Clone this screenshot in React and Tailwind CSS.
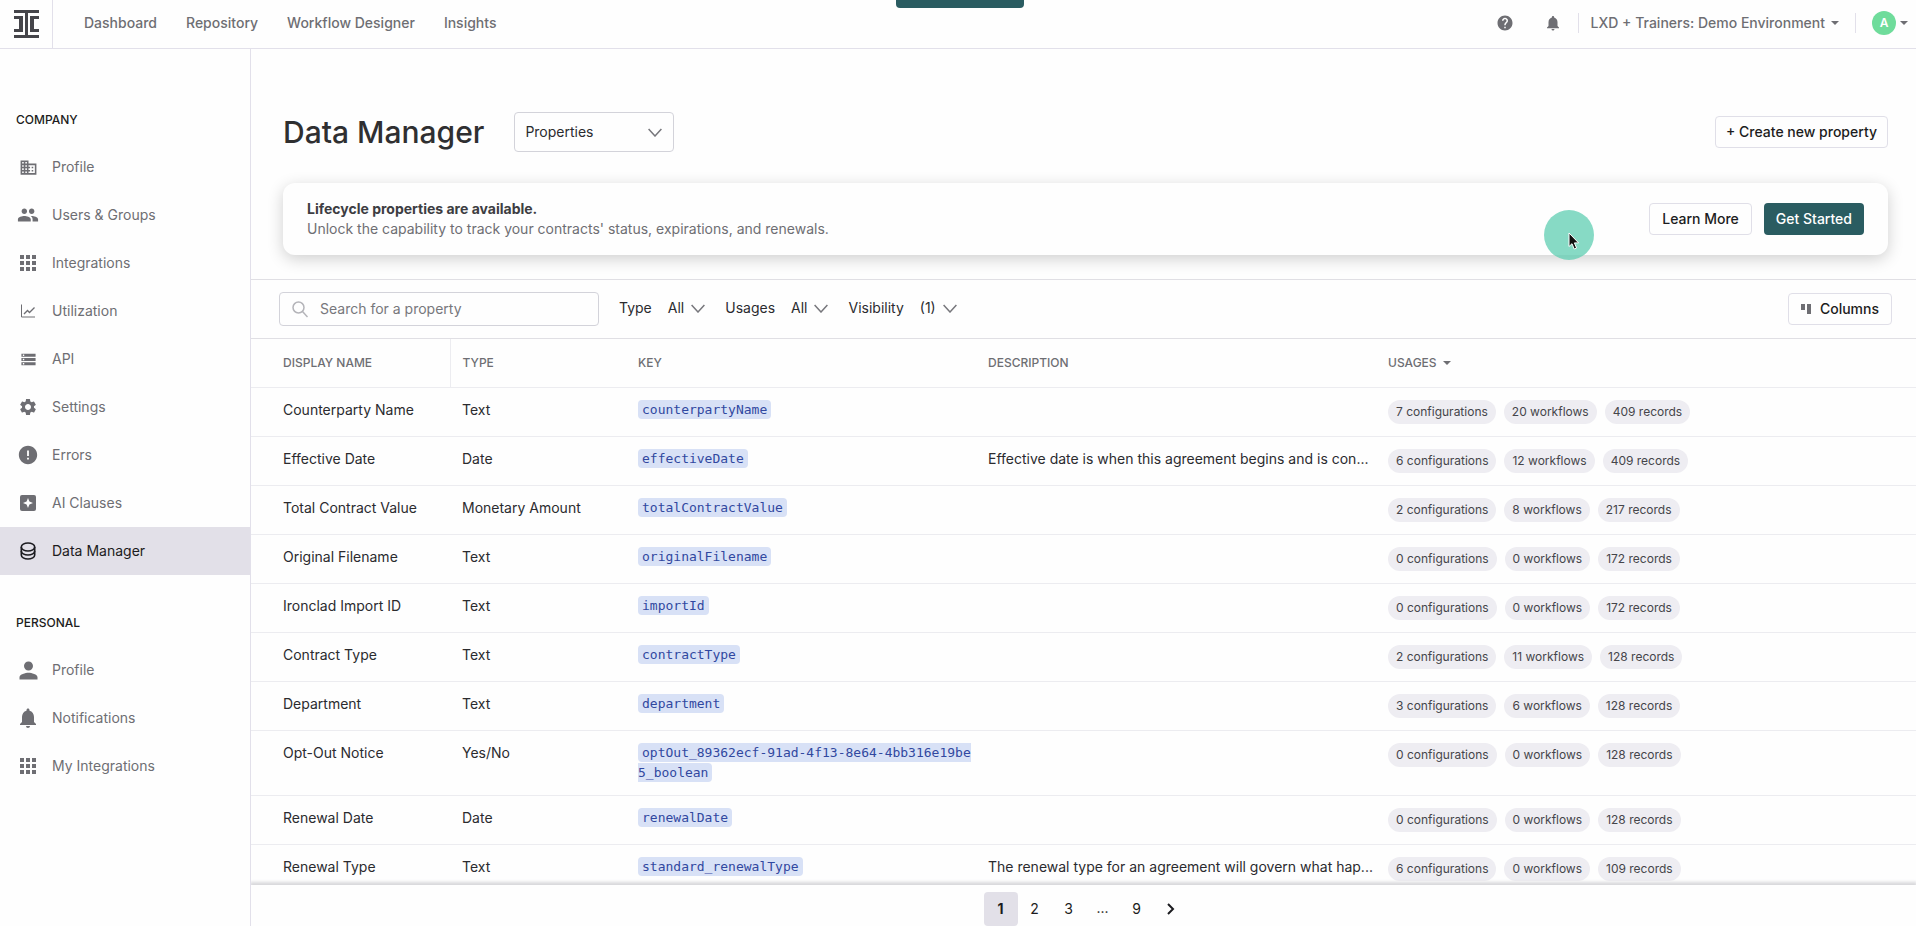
import React from 'react';
import {
  MdApps,
  MdBusiness,
  MdError,
  MdHelp,
  MdNotifications,
  MdPeople,
  MdPerson,
  MdSettings,
  MdStorage,
} from 'react-icons/md';

const topLinks = ['Dashboard', 'Repository', 'Workflow Designer', 'Insights'];

const companyLinks = [
  { label: 'Profile', icon: <MdBusiness size={19} /> },
  { label: 'Users & Groups', icon: <MdPeople size={22} /> },
  { label: 'Integrations', icon: <MdApps size={24} /> },
  { label: 'Utilization', icon: <ChartIcon /> },
  { label: 'API', icon: <MdStorage size={17} /> },
  { label: 'Settings', icon: <MdSettings size={20} /> },
  { label: 'Errors', icon: <MdError size={22} /> },
  { label: 'AI Clauses', icon: <SparkleIcon /> },
  { label: 'Data Manager', icon: <DatabaseIcon />, active: true },
];

const personalLinks = [
  { label: 'Profile', icon: <MdPerson size={27} /> },
  { label: 'Notifications', icon: <MdNotifications size={24} /> },
  { label: 'My Integrations', icon: <MdApps size={24} /> },
];

const rows = [
  { name: 'Counterparty Name', type: 'Text', id: 'counterpartyName', description: '', usages: [7, 20, 409] },
  { name: 'Effective Date', type: 'Date', id: 'effectiveDate', description: 'Effective date is when this agreement begins and is con...', usages: [6, 12, 409] },
  { name: 'Total Contract Value', type: 'Monetary Amount', id: 'totalContractValue', description: '', usages: [2, 8, 217] },
  { name: 'Original Filename', type: 'Text', id: 'originalFilename', description: '', usages: [0, 0, 172] },
  { name: 'Ironclad Import ID', type: 'Text', id: 'importId', description: '', usages: [0, 0, 172] },
  { name: 'Contract Type', type: 'Text', id: 'contractType', description: '', usages: [2, 11, 128] },
  { name: 'Department', type: 'Text', id: 'department', description: '', usages: [3, 6, 128] },
  { name: 'Opt-Out Notice', type: 'Yes/No', id: 'optOut_89362ecf-91ad-4f13-8e64-4bb316e19be5_boolean', description: '', usages: [0, 0, 128] },
  { name: 'Renewal Date', type: 'Date', id: 'renewalDate', description: '', usages: [0, 0, 128] },
  { name: 'Renewal Type', type: 'Text', id: 'standard_renewalType', description: 'The renewal type for an agreement will govern what hap...', usages: [6, 0, 109] },
];

function Logo() {
  return (
    <svg width="26" height="28" viewBox="0 0 26 28" fill="#45454a" aria-hidden="true">
      <path d="M0 0h25v3H0zM0 25h25v3H0zM11 3h3v22h-3z" />
      <path d="M0 6h9v16H0v-3h5V9H0zM25 6h-9v16h9v-3h-5V9h5z" />
    </svg>
  );
}

function ChartIcon() {
  return (
    <svg width="14" height="14" viewBox="0 0 14 14" fill="none" stroke="currentColor" aria-hidden="true">
      <path d="M.5 .5v12.5h13.500" />
      <path d="M3 10l3.500-3.500 2 2L13.500 3.500" strokeWidth="1.300" />
    </svg>
  );
}

function SparkleIcon() {
  return (
    <svg width="16" height="16" viewBox="0 0 16 16" aria-hidden="true">
      <rect width="16" height="16" rx="2" fill="currentColor" />
      <path d="M8 3l1.400 3.600L13 8 9.400 9.400 8 13 6.600 9.400 3 8l3.600-1.400z" fill="#fff" />
    </svg>
  );
}

function DatabaseIcon() {
  return (
    <svg width="16" height="18" viewBox="0 0 16 18" fill="none" stroke="currentColor" strokeWidth="1.600" aria-hidden="true">
      <ellipse cx="8" cy="5" rx="6.700" ry="4" />
      <path d="M1.300 5v8c0 2.200 3 4 6.700 4s6.700-1.800 6.700-4V5" />
      <path d="M1.300 9c0 2.200 3 4 6.700 4s6.700-1.800 6.700-4" />
    </svg>
  );
}

function Chevron({ className = '' }) {
  return (
    <svg width="14" height="9" viewBox="0 0 14 9" fill="none" stroke="#77777c" strokeWidth="1.500" className={className} aria-hidden="true">
      <path d="M.6 1L7 8l6.400-7" />
    </svg>
  );
}

function Caret() {
  return (
    <svg width="8" height="4" viewBox="0 0 8 4" fill="currentColor" aria-hidden="true">
      <path d="M0 0h8L4 4z" />
    </svg>
  );
}

function SideSection({ title, links }) {
  return (
    <section className="pt-10">
      <h2 className="mb-[15px] px-4 text-xs leading-4 font-medium text-[#1c1c20]">{title}</h2>
      <ul>
        {links.map((link) => (
          <li key={link.label}>
            <a
              href="#"
              className={`flex h-12 items-center gap-3 px-4 text-sm ${
                link.active ? 'bg-[#e2e0e8] text-[#1c1c20]' : 'text-[#6e6e73]'
              }`}
            >
              <span className="flex w-6 justify-center [&>svg]:shrink-0">{link.icon}</span>
              {link.label}
            </a>
          </li>
        ))}
      </ul>
    </section>
  );
}

function Filter({ label, value }) {
  return (
    <div className="flex items-center gap-4">
      <span>{label}</span>
      <button type="button" aria-label={`${label} filter`} className="flex items-center gap-[7px]">
        {value}
        <Chevron />
      </button>
    </div>
  );
}

function Pill({ children }) {
  return <span className="rounded-full bg-[#eeedf2] px-2 text-xs leading-6 text-[#45454a]">{children}</span>;
}

function TopBar() {
  return (
    <header className="flex h-[49px] shrink-0 items-center border-b border-[#e2e0ea] text-sm font-medium text-[#6e6e73]">
      <a href="#" aria-label="Home" className="flex h-full w-[53px] items-center border-r border-[#e2e0ea] pl-3.5">
        <Logo />
      </a>
      <nav className="flex gap-[29px] pb-0.5 pl-[31px]">
        {topLinks.map((label) => (
          <a key={label} href="#">{label}</a>
        ))}
      </nav>
      <div className="ml-auto flex items-center pr-2 pb-0.5">
        <button type="button" aria-label="Help" className="mr-[30px]"><MdHelp size={18} /></button>
        <button type="button" aria-label="Notifications" className="mr-4"><MdNotifications size={18} /></button>
        <button type="button" className="flex items-center gap-1.5 border-x border-[#e2e0ea] pr-4 pl-3">
          LXD + Trainers: Demo Environment
          <Caret />
        </button>
        <button type="button" aria-label="Account" className="ml-4 flex items-center gap-1">
          <span className="flex size-6 items-center justify-center rounded-full bg-[#6fdc9b] text-xs font-semibold text-white">A</span>
          <Caret />
        </button>
      </div>
    </header>
  );
}

function PropertyTable() {
  return (
    <table className="w-full table-fixed border-collapse text-left text-sm text-[#2b2b2f]">
      <colgroup>
        <col className="w-[199px]" />
        <col className="w-[176px]" />
        <col className="w-[350px]" />
        <col className="w-[400px]" />
        <col />
      </colgroup>
      <thead>
        <tr className="h-12 border-b border-[#ececf0] text-xs text-[#6e6e73]">
          <th className="border-r border-[#ececf0] pl-8 font-medium">DISPLAY NAME</th>
          <th className="pl-3 font-medium">TYPE</th>
          <th className="pl-3 font-medium">KEY</th>
          <th className="pl-3 font-medium">DESCRIPTION</th>
          <th className="pl-3 font-medium">
            <button type="button" className="flex items-center gap-1.5">
              USAGES
              <Caret />
            </button>
          </th>
        </tr>
      </thead>
      <tbody>
        {rows.map((row) => (
          <tr key={row.id} className="h-[49px] border-b border-[#ececf0] align-top leading-5">
            <td className="py-3 pl-8">{row.name}</td>
            <td className="py-3 pl-3">{row.type}</td>
            <td className="py-3 pl-3 font-['DejaVu_Sans_Mono',monospace] text-[13px] leading-5 break-all">
              <code className="rounded-sm bg-[#d8e1f6] px-1 py-0.5 font-['DejaVu_Sans_Mono',monospace] text-[#3148a0]">
                {row.id}
              </code>
            </td>
            <td className="truncate py-3 pl-3">{row.description}</td>
            <td className="py-3 pl-3">
              <div className="flex gap-2">
                <Pill>{row.usages[0]} configurations</Pill>
                <Pill>{row.usages[1]} workflows</Pill>
                <Pill>{row.usages[2]} records</Pill>
              </div>
            </td>
          </tr>
        ))}
      </tbody>
    </table>
  );
}

function Pagination() {
  return (
    <nav aria-label="Pagination" className="z-10 flex h-[41px] shrink-0 items-end justify-center bg-[#fefefe] pl-1 text-sm text-[#1c1c20] shadow-[0_-2px_3px_1px_#d9d9dc]">
      <button type="button" aria-current="page" className="size-[34px] rounded-sm bg-[#e2e0e8] font-bold">1</button>
      <button type="button" className="size-[34px]">2</button>
      <button type="button" className="size-[34px]">3</button>
      <span className="size-[34px] text-center leading-8">...</span>
      <button type="button" className="size-[34px]">9</button>
      <button type="button" aria-label="Next page" className="flex size-[34px] items-center justify-center">
        <svg width="8" height="12" viewBox="0 0 8 12" fill="none" stroke="currentColor" strokeWidth="2">
          <path d="M1 1l5 5-5 5" />
        </svg>
      </button>
    </nav>
  );
}

export default function App() {
  return (
    <div className="relative flex h-screen flex-col overflow-hidden bg-[#fefefe] font-['Inter','Liberation_Sans',sans-serif]">
      <TopBar />
      {/* Collapsed banner tab over the top bar */}
      <div className="absolute top-0 left-1/2 h-2 w-32 -translate-x-[62px] rounded-b-sm bg-[#2a5c61]" />

      <div className="flex min-h-0 flex-1">
        <aside className="w-[251px] shrink-0 border-r border-[#e2e0ea] pt-[23px]">
          <SideSection title="COMPANY" links={companyLinks} />
          <SideSection title="PERSONAL" links={personalLinks} />
        </aside>

        <main className="flex min-w-0 flex-1 flex-col overflow-hidden">
          <div className="flex items-center pt-[63px] pr-7 pl-8">
            <h1 className="text-3xl leading-10 font-medium text-[#2f2f31]">Data Manager</h1>
            <div className="relative ml-[30px]">
              <select aria-label="Data type" className="h-10 w-40 appearance-none rounded-sm border border-[#d3d3da] bg-transparent px-2.5 text-sm text-[#2b2b2f]">
                <option>Properties</option>
              </select>
              <Chevron className="pointer-events-none absolute top-4 right-3" />
            </div>
            <button type="button" className="ml-auto h-8 rounded-sm border border-[#e0dfe8] px-2.5 text-sm font-medium text-[#1c1c20]">
              + Create new property
            </button>
          </div>

          <section className="relative mt-[31px] mr-7 mb-6 ml-8 flex h-[72px] shrink-0 items-center gap-3 rounded-xl bg-[#fefefe] px-6 shadow-[0_4px_16px_rgba(0,0,0,0.19)]">
            <div className="mr-auto text-sm leading-5 text-[#6e6e73]">
              <p className="font-bold text-[#3d3d42]">Lifecycle properties are available.</p>
              <p>Unlock the capability to track your contracts' status, expirations, and renewals.</p>
            </div>
            <button type="button" className="h-8 rounded-sm border border-[#e0dfe8] px-3 text-sm font-medium text-[#1c1c20]">Learn More</button>
            <button type="button" className="h-8 rounded-sm bg-[#2a5c61] px-3 text-sm font-medium text-white">Get Started</button>

            {/* Click highlight with the pointer */}
            <div className="absolute top-[27px] right-[294px] size-[50px] rounded-full bg-[#5fcdb1]/75">
              <svg width="12" height="19" viewBox="0 0 12 19" className="absolute top-[22px] left-6" aria-hidden="true">
                <path d="M1 1v13.500l3-2.800 2.200 5.300 2.400-1-2.200-5.100h4.200z" fill="#111" stroke="#fff" />
              </svg>
            </div>
          </section>

          <div className="flex items-center border-y border-[#e0dfe4] py-3 pr-6 pl-7 text-sm text-[#2b2b2f]">
            <label className="mr-5 flex h-[34px] w-80 items-center rounded-sm border border-[#d3d3da] pl-3">
              <svg width="16" height="17" viewBox="0 0 16 17" fill="none" stroke="#b4b4b9" strokeWidth="1.500" aria-hidden="true">
                <circle cx="6.500" cy="6.500" r="5.500" />
                <path d="M10.500 10.500l5 5.500" />
              </svg>
              <input type="text" aria-label="Search for a property" placeholder="Search for a property" className="ml-3 flex-1 outline-none placeholder:text-[#77777c]" />
            </label>
            <div className="flex gap-5 pb-0.5">
              <Filter label="Type" value="All" />
              <Filter label="Usages" value="All" />
              <Filter label="Visibility" value="(1)" />
            </div>
            <button type="button" className="ml-auto flex h-8 items-center gap-2 rounded-sm border border-[#e0dfe8] px-3 font-medium text-[#1c1c20]">
              <svg width="11" height="10" viewBox="0 0 11 10" fill="#6e6e73" aria-hidden="true">
                <path d="M0 0h4v6H0zM6 0h4v10H6z" />
              </svg>
              Columns
            </button>
          </div>

          <div className="min-h-0 flex-1 overflow-hidden">
            <PropertyTable />
          </div>
          <Pagination />
        </main>
      </div>
    </div>
  );
}
